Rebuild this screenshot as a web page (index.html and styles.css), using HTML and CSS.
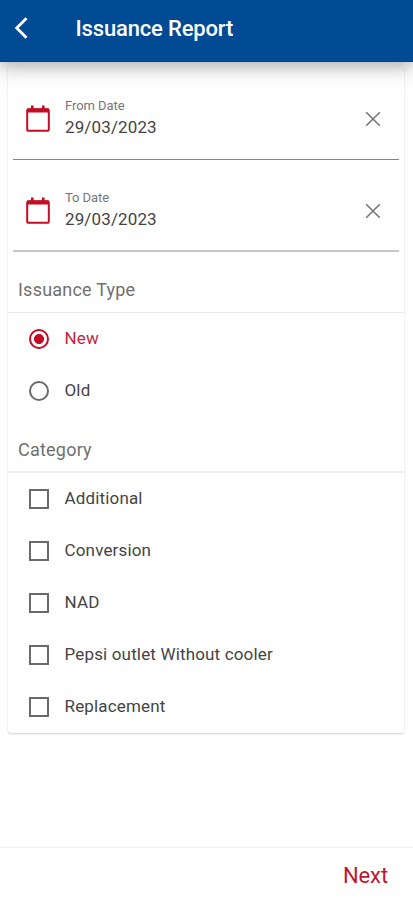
FILE: index.html
```html
<!DOCTYPE html>
<html lang="en">
<head>
<meta charset="utf-8">
<title>Issuance Report</title>
<meta name="viewport" content="width=device-width, initial-scale=1">
<link rel="stylesheet" href="styles.css">
</head>
<body>
<div class="app">
  <header class="bar">
    <svg class="back" width="16" height="24" viewBox="0 0 16 24"><path d="M13.5 2.2 3.7 12l9.8 9.8"/></svg>
    <h1>Issuance Report</h1>
  </header>
  <main>
    <section class="card">
      <div class="field">
        <svg class="cal" width="24" height="28" viewBox="0 0 24 28"><rect x="1.2" y="4.2" width="21.6" height="21.6" rx="1.6"/><path class="solid" d="M1 3.5h22v4H1zM5 .4h2.6v4H5zM16 .4h2.6v4H16z"/></svg>
        <div class="value"><span class="label">From Date</span><span class="date">29/03/2023</span></div>
        <svg class="clear" width="16" height="16" viewBox="0 0 16 16"><path d="m1.2 1.2 13.6 13.6M14.8 1.2 1.2 14.8"/></svg>
      </div>
      <div class="field light">
        <svg class="cal" width="24" height="28" viewBox="0 0 24 28"><rect x="1.2" y="4.2" width="21.6" height="21.6" rx="1.6"/><path class="solid" d="M1 3.5h22v4H1zM5 .4h2.6v4H5zM16 .4h2.6v4H16z"/></svg>
        <div class="value"><span class="label to">To Date</span><span class="date">29/03/2023</span></div>
        <svg class="clear" width="16" height="16" viewBox="0 0 16 16"><path d="m1.2 1.2 13.6 13.6M14.8 1.2 1.2 14.8"/></svg>
      </div>
      <h2 class="type"><span>Issuance Type</span></h2>
      <div class="row selected"><i class="radio"></i><span>New</span></div>
      <div class="row"><i class="radio"></i><span>Old</span></div>
      <h2 class="category"><span>Category</span></h2>
      <div class="row"><i class="check"></i><span>Additional</span></div>
      <div class="row"><i class="check"></i><span>Conversion</span></div>
      <div class="row"><i class="check"></i><span>NAD</span></div>
      <div class="row"><i class="check"></i><span>Pepsi outlet Without cooler</span></div>
      <div class="row"><i class="check"></i><span>Replacement</span></div>
    </section>
  </main>
  <footer><span class="next">Next</span></footer>
</div>
</body>
</html>
```
FILE: styles.css
```css
* { box-sizing: border-box; }
body { margin: 0; background: #fefefe; font-family: Roboto, "Liberation Sans", sans-serif; color: #444; }
.app { height: 900px; display: flex; flex-direction: column; overflow: hidden; }
.bar {
  height: 62px; flex: none; padding: 0 0 5px 13px; display: flex; align-items: center;
  background: #004b93; border-bottom: 1px solid #003f94;
  box-shadow: 0 5px 10px rgba(0,0,0,.13), 0 10px 20px rgba(0,0,0,.15);
  position: relative; z-index: 1;
}
.back { fill: none; stroke: #fff; stroke-width: 2.8; }
h1 { margin: 2px 0 0 46.5px; font-size: 22px; line-height: 28px; font-weight: 500; color: #fff; letter-spacing: -.16px; }
main { flex: 1; padding: 5px 9px 0 8px; }
.card { background: #fff; border-radius: 3px; box-shadow: 0 1px 2px rgba(0,0,0,.18); padding-bottom: 0; }
.field {
  height: 93px; margin: 0 5px; padding: 0 18px 0 13px; display: flex; align-items: center;
  border-bottom: 1px solid #858585;
}
.field.light { height: 92px; border-bottom: 2px solid #c6c6c6; }
.cal { fill: none; stroke: #c40d25; stroke-width: 2; margin-top: 12px; }
.cal .solid { fill: #c40d25; stroke: none; }
.value { margin: 10px 0 0 15px; flex: 1; display: flex; flex-direction: column; }
.label { font-size: 13px; line-height: 18px; color: #777; letter-spacing: -.05px; }
.date { font-size: 17px; line-height: 25px; color: #444; letter-spacing: .13px; }
.clear { fill: none; stroke: #777; stroke-width: 1.6; margin-top: 12px; }
h2 { margin: 0; padding-left: 10px; height: 61px; font-size: 18px; line-height: 24px; font-weight: 400; color: #707070; letter-spacing: .22px; border-bottom: 1px solid #e8e8e8; }
.type { padding-top: 26px; }
.category { height: 56px; padding-top: 21px; border-bottom-width: 2px; border-color: #efefef; }
.row { height: 52px; padding: 0 0 1px 20.5px; display: flex; align-items: center; font-size: 17px; line-height: 24px; color: #444; letter-spacing: .16px; }
.row span { margin: -1px 0 0 16px; }
.radio, .check { display: block; width: 20px; height: 20px; border: 2px solid #6a6a6a; }
.radio { border-radius: 50%; }
.selected { color: #c51f42; }
.selected .radio { border-color: #c40d25; background: radial-gradient(circle, #c40d25 0 4.7px, transparent 5.3px); }
footer { height: 53px; flex: none; border-top: 1px solid #f1f1f1; padding: 4px 25px 0 0; display: flex; align-items: center; justify-content: flex-end; }
.next { color: #bd1830; font-size: 22px; line-height: 28px; letter-spacing: -.1px; }
```
